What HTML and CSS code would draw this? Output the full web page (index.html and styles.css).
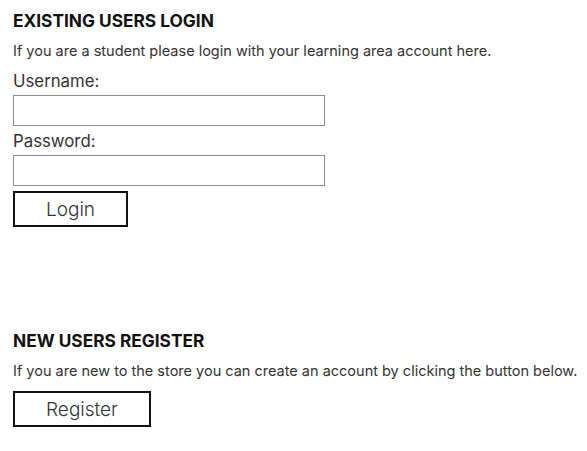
FILE: index.html
```html
<!DOCTYPE html>
<html>
<head>
<meta charset="utf-8">
<link rel="stylesheet" href="styles.css">
</head>
<body>
<section class="block login">
  <h2 class="title">EXISTING USERS LOGIN</h2>
  <p class="note">If you are a student please login with your learning area account here.</p>
  <form class="form">
    <label class="label">Username:</label>
    <input class="field field-user" type="text">
    <label class="label">Password:</label>
    <input class="field field-pass" type="password">
    <button class="btn btn-login" type="button">Login</button>
  </form>
</section>
<section class="block register">
  <h2 class="title">NEW USERS REGISTER</h2>
  <p class="note">If you are new to the store you can create an account by clicking the button below.</p>
  <button class="btn btn-register" type="button">Register</button>
</section>
</body>
</html>
```
FILE: styles.css
```css
html, body {
  margin: 0;
  padding: 0;
  background: #fff;
}
body {
  font-family: "Inter", "DejaVu Sans", sans-serif;
  color: #333;
  padding: 0 0 0 13px;
}
.block {
  display: flex;
  flex-direction: column;
  align-items: flex-start;
}
.login {
  padding-top: 11px;
}
.register {
  padding-top: 104px;
}
.title {
  margin: 0;
  font-size: 17.3px;
  line-height: 20px;
  font-weight: 700;
  color: #111;
}
.note {
  margin: 11px 0 0;
  font-size: 14.5px;
  line-height: 18px;
  color: #333;
  white-space: nowrap;
}
.form {
  display: flex;
  flex-direction: column;
  align-items: flex-start;
  margin-top: 10px;
}
.label {
  font-size: 16.8px;
  line-height: 22px;
  color: #333;
}
.field {
  box-sizing: border-box;
  width: 312px;
  height: 31px;
  margin: 3px 0 4px;
  border: 1px solid #8c8c8c;
  padding: 0 6px;
  font: inherit;
}
.btn {
  box-sizing: border-box;
  height: 36px;
  border: 2px solid #111;
  background: #fff;
  font-family: inherit;
  font-size: 19px;
  font-weight: 300;
  color: #333;
  padding: 0;
  cursor: pointer;
}
.btn-login {
  width: 115px;
  margin-top: 1px;
}
.btn-register {
  width: 138px;
  margin-top: 11px;
}
```
